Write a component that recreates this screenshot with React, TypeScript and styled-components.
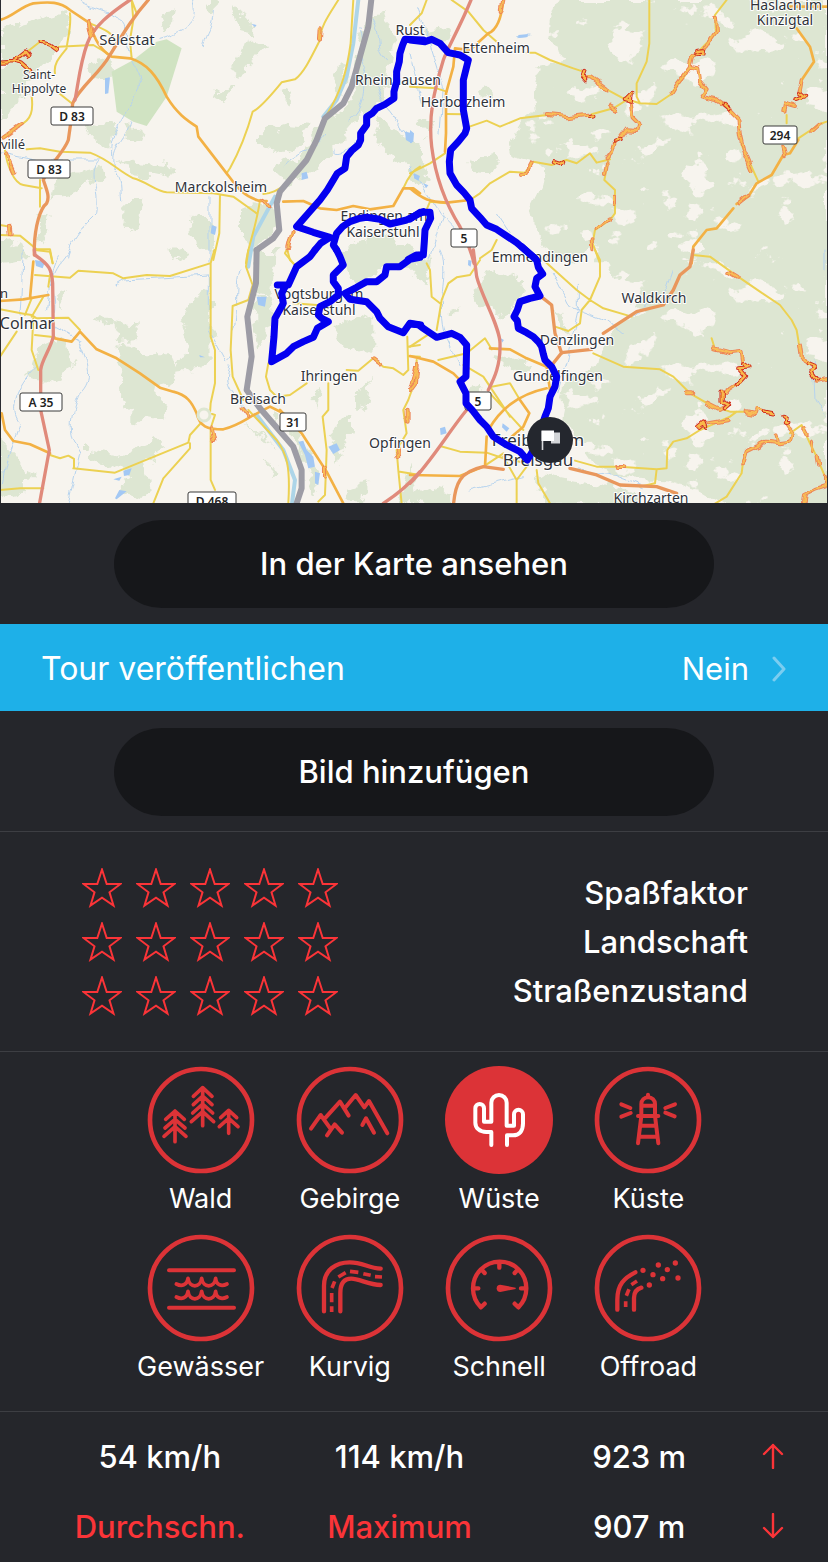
import React, { useState } from "react";
import styled, { createGlobalStyle } from "styled-components";

const color = {
  page: "#25262b",
  pill: "#16171a",
  line: "#3d3e43",
  blue: "#1eb0e8",
  red: "#fb3438",
  badge: "#dc3337",
  text: "#ffffff",
};

const GlobalStyle = createGlobalStyle`
  *, *::before, *::after { box-sizing: border-box; }
  body {
    margin: 0;
    background: ${color.page};
    color: ${color.text};
    font-family: Inter, "Liberation Sans", sans-serif;
  }
  button { font: inherit; color: inherit; border: 0; cursor: pointer; }
`;

/* ---------- map data: four tiles, three units per pixel ---------- */

type Layer =
  | "forest" | "deep" | "wood" | "stream" | "lake" | "minor" | "major"
  | "trunk" | "motorway" | "winding" | "hairpin" | "border" | "rhine" | "route";

type Tile = { x: number; y: number } & Partial<Record<Layer, string>>;

const tiles: Tile[] = [
  {
    x: 0,
    y: 0,
    forest:
      "M0 100L60 70L200 35L195 90L150 190L100 240L60 300L20 340L0 360ZM1100 50L1160 40L1180 150L1170 250L1140 300L1090 340L1030 410L960 500L900 540L870 555L820 510L900 470L920 430L970 365L1050 310ZM780 400L860 375L920 380L900 430L850 460L780 440ZM1140 335L1190 400L1260 430V505L1180 470L1120 400ZM360 470L420 490L520 500L500 530L400 520ZM160 540L240 515L300 500L310 530L200 580L150 590ZM560 690L600 645L640 670L650 740L600 740ZM370 600L430 600L420 690L370 670ZM720 620L770 610L830 620L825 710L760 750L720 700ZM715 150L760 120L800 130L760 180L740 230L700 220ZM640 265L690 270L670 320ZM1000 220L1045 190L1030 300L1000 250ZM110 660L150 640L130 740ZM1050 735L1150 700L1260 760V800H1060ZM270 380L340 360L330 440L280 430ZM380 380L440 390L420 440L380 430ZM480 40L530 30L525 80L490 90ZM700 30L740 50L760 100L720 90ZM840 280L880 260L870 320ZM270 190L330 180L320 250L280 240ZM610 0H660L640 40ZM0 730L40 720L30 780H0Z",
    deep: "M335 215L400 180L470 125L500 118L545 145L500 290L440 378L400 365L350 335Z",
    stream:
      "M240 0C260 30 380 40 380 80C370 180 430 200 420 270C380 340 330 400 335 470M580 0C600 60 570 90 480 115M640 30C635 100 620 90 610 140M390 365C370 430 330 440 340 500C370 540 360 560 365 600M300 480C260 520 300 560 290 640C230 700 210 720 200 780M0 455L120 480L300 480M1080 80C1100 130 1070 160 1100 200C1080 260 1110 300 1050 360M1120 60C1150 110 1120 140 1160 180M850 500C890 450 940 460 980 400M1000 440C990 480 1030 470 1080 410M1125 240L1150 310L1225 410M630 590V780",
    lake: "M315 235L330 232L325 280L315 282ZM1215 395L1240 400L1235 430L1218 420ZM635 675L650 680L645 705L632 700ZM905 520L920 515L925 535L905 540ZM755 72L770 75L765 82Z",
    rhine: "M1075 0L1060 130L1040 230L1010 300L970 350M825 590L760 710L745 800",
    minor:
      "M270 70C320 90 340 100 350 130M210 40C215 80 200 130 200 145C180 170 160 190 165 220M175 140L280 135L330 165M395 0L400 60L390 120L395 175M395 0L410 40M165 270L215 310M95 290C100 330 95 360 60 375L10 410M80 448L120 445L180 455L270 458C330 480 350 510 400 535C440 545 470 575 500 577L640 580L700 590L770 640M1015 0C990 40 960 80 960 120C930 180 910 220 885 238L845 247C810 290 780 325 758 335C740 400 720 450 690 505L680 520M660 585L658 700L640 780M1060 0L1052 130C1040 220 1020 280 980 345C950 420 910 500 870 545C830 575 810 580 790 582M780 600C770 680 740 750 738 790M15 450C20 490 40 550 70 555L125 565M120 540V620M0 705L60 707L110 748H150L158 790M1260 500C1240 510 1225 530 1210 565M865 740L855 760L880 790M0 675L30 680M50 180L120 125",
    major:
      "M0 60C40 50 60 20 100 10C150 5 180 5 210 30L270 70C280 110 300 150 335 170L390 175C440 190 470 225 500 290C530 340 560 360 590 380L595 410L680 520C710 560 730 590 780 603H800M850 605L910 603L960 625L1010 630L1060 618L1110 628L1180 618L1210 565L1240 565L1260 580",
    trunk:
      "M445 0C400 50 370 100 330 165C300 220 240 260 218 310C215 350 210 390 205 420C190 460 150 490 130 540C140 570 150 590 140 610C120 625 105 680 103 740V765",
    motorway: "M390 0C330 40 280 80 262 130C240 190 235 250 225 300",
    winding: "M962 85L960 120M790 600L810 625M875 690L862 745M30 680L32 700M10 410L60 375M15 460L40 515M268 60L278 110",
    hairpin: "M5 185L40 183L75 155L85 168M40 185L65 190L90 212M125 125L150 130L170 145",
    border:
      "M1115 -10L1105 80L1080 170L1055 260L1030 310L975 355L950 420L920 480L840 575L830 610L838 690L820 715L770 750",
    route:
      "M1270 120L1215 118L1208 135L1200 160L1198 185L1190 215L1190 245L1182 275V295L1155 313L1130 325L1117 340L1100 350V375L1082 400V420L1075 435L1055 452L1040 470L1035 505L1012 520L1000 540L982 570L960 600L925 640L890 680L940 697L990 712L962 730L945 750M1010 750L1000 735L1010 700L1028 680L1050 665L1076 656L1100 652L1140 658L1170 672L1220 660L1270 635",
  },
  {
    x: 410,
    y: 0,
    wood:
      "M450 0L430 60L420 110L440 150L480 180L390 200L370 260L380 330L330 370L300 420L310 470L400 500L390 560L360 620L380 700L420 790H1254V0Z",
    forest:
      "M40 90L90 80L120 110L100 130L50 110ZM220 250L260 280L250 300L210 280ZM180 480L240 465L265 490L240 520L190 515ZM0 460L40 490L60 540L20 560L0 540ZM30 340L60 370L50 410L20 380Z",
    stream: "M20 20L60 130L100 260L90 400M0 500L90 640L150 700M320 110L360 105M100 640L60 780M0 160L40 320M260 640L300 700",
    lake: "M0 390L12 400L10 425L0 430ZM12 520L30 528L25 542L12 535ZM325 105L355 102L350 112L325 114ZM40 550L55 556L48 565Z",
    minor:
      "M125 0L175 35L220 90L260 125M50 0L35 40L0 75M0 520L60 490L105 460M0 260L80 265L110 275M110 342L160 343M350 158H375L420 180L490 205L520 215M180 600L210 580L240 550L300 515L345 518L370 485L425 495L470 480L500 490L540 460L560 488L600 478M170 383L230 362L270 380L330 355L410 345M545 343L610 325L650 300M590 268L640 295L690 310L740 312L780 285L830 220M718 0V130L710 185L680 250V290L690 310M950 0L915 45L918 100L870 150M595 480L583 540L615 570V640L600 660L555 690L548 730L570 790M990 400L995 435L1045 545M1250 365L1230 372L1165 415M1130 345V370M260 720L245 750L210 775M110 610L60 605L45 640",
    major:
      "M280 0C275 50 260 90 235 100L180 150L135 145L130 200L108 280V400L105 455M0 565C40 600 60 605 110 608L180 600M1160 85L1200 140L1212 185L1175 240L1170 290M1165 420L1140 460L1120 465L1085 525L1040 550L1015 590L980 612M970 625L920 685L890 690L850 740L845 790M1120 440L1125 465M1130 20L1250 20",
    motorway: "M183 0C150 80 110 150 100 180C70 280 55 350 65 440C75 520 100 600 150 680C175 730 185 760 192 790",
    winding:
      "M530 235L545 235L590 268M410 345L475 352L545 343M600 320L618 330M660 315L665 350L685 370L680 390L650 388L630 415L615 430L605 455L590 475M590 490L585 525M915 50L918 95L880 150L850 165L842 200L865 205L870 240L890 265L872 290L920 300L950 320L985 355L990 405L1000 450L1025 510M842 200L800 255L785 280M1175 240L1168 280M1155 318L1125 310L1120 335M330 522L350 518L365 490M615 590V615M600 655L560 685M548 715L550 745M1210 390L1230 372M280 0L275 30M1120 440L1125 460M1015 585L985 610",
    hairpin:
      "M520 210L515 225L528 240M650 300L665 285L662 305L645 300M865 150L882 148L880 160L865 158M1168 280L1182 292L1160 300M940 312L955 325M615 425L632 420M540 345L550 343M435 487L450 492L462 484",
    route:
      "M375 775L340 745L320 728L290 708L260 688L230 675L210 652L185 625L180 600L162 578L140 555L120 520L118 485L122 450L145 425L165 400L170 385L160 330V240L175 180L150 165L115 158L90 130L65 118L45 125L0 120M0 657L30 637L60 637L62 655L45 690L43 725L40 765L20 765L-5 778",
  },
  {
    x: 0,
    y: 250,
    forest:
      "M350 280L400 285L440 310L520 310L545 350L510 400L460 410L500 480L490 510L430 500L400 525V480L370 440L350 420L370 370ZM540 200L590 140L630 130L632 330L600 350L530 360L570 280ZM325 210L410 220V270L360 275ZM100 300L180 260L220 310L210 370L150 400L60 390L120 330ZM255 595L350 610L390 600L460 570L490 600L440 640L455 720L420 745L360 730L390 670L300 640L255 620ZM0 560L60 620L95 680L60 740L0 760ZM770 130L810 130L820 200L775 300L760 240ZM755 0H830L815 130L775 120ZM980 560L1050 490V550L1010 640ZM1000 230L1120 190V290L1040 310ZM1020 0H1260L1230 30L1100 90L1045 80ZM1060 430L1110 390L1100 460L1070 480ZM800 640L830 650L820 690ZM1240 640L1190 760H1260ZM1040 710L1100 700L1090 760H1040ZM300 200L325 205L310 235ZM0 0L60 -20L80 30L0 40ZM500 0L550 -10L560 20L510 30ZM720 520L830 590L800 560ZM930 430L960 420L950 480ZM860 520L900 560L960 700L940 740L900 600ZM170 130L200 120L190 180ZM820 480L850 500L835 520Z",
    stream:
      "M70 0L60 200M210 0C190 40 150 50 140 180M350 105L375 90L625 75M625 75V240L680 340L690 320M235 270C270 350 280 390 240 430C210 500 200 540 240 610L200 780M110 350C60 400 20 470 60 520C40 580 20 640 10 700M720 60C700 120 720 180 700 240M690 350C670 400 690 420 740 480M175 20C130 100 190 150 150 220L240 270",
    lake:
      "M770 140H800L795 170L775 165ZM895 575L910 572L920 600L940 620L945 650L925 655L915 615ZM985 590L1010 580L1020 600L1000 612ZM945 665L960 670L955 705L945 700ZM340 688L365 680L358 692ZM370 662L395 655L388 675L372 678ZM345 745L358 720L380 724L350 748ZM598 315L615 322L600 322ZM105 30L135 35L128 55L108 48Z",
    rhine: "M770 495L850 600L885 690L875 770",
    minor:
      "M105 0L150 5L158 40M105 75L210 83L235 62L340 70L370 85L440 75L510 78L630 40M643 0L632 40V260L645 300V400L632 460L630 490L645 495L632 535V690L645 720M0 178L75 192L95 195L110 205L205 203L240 240M130 140L95 200M75 195L95 145M150 75L145 110M100 205L95 300L115 360M105 255L165 262M50 245L0 320M220 655L345 668L565 578L570 555L600 522M150 615L180 625L205 617L222 627V655M0 720L60 715H130M570 580V595L490 685L460 760M745 0L738 50L758 105L745 150L698 168L692 300L698 380L730 450M745 480L830 570C860 610 872 650 865 760M805 340L798 380L810 420L830 440L870 435L920 400M985 400V480L968 500L980 600L978 660L975 735L955 755M1040 360L1075 362L1120 325L1150 350L1180 355L1210 375L1225 360L1222 260M1225 290L1260 285M1225 318L1260 320M1250 330V380L1225 450L1210 480L1220 550L1190 600L1195 660L1205 760M1200 665L1260 675M862 0L870 30L890 50M880 160L950 165",
    major:
      "M100 35L90 145M0 153L70 148L145 135M165 265L215 275L240 245L290 298L350 325L420 370L480 413L520 425C560 435 575 455 590 490C600 530 620 538 670 538C720 525 740 505 775 488L810 470L850 490M840 480L905 550L980 665L1030 760M5 490L15 540L40 573L90 583L150 610",
    motorway:
      "M103 0L105 15C150 45 155 60 158 100L160 260C150 300 125 330 122 360V480L148 600L115 780M1150 760C1190 735 1230 700 1260 665",
    winding: "M1120 325L1140 340M1248 350L1235 410M1220 485V515M728 475L745 498M633 535L640 570M1190 590L1195 615M978 650V680",
    border: "M770 0L768 100L742 200L755 320L740 420L780 475L880 590L905 660V715L885 775",
    route:
      "M945 0L930 20L890 50L865 105L832 105M857 107L845 130L850 160L825 205L822 260L815 335L860 310L880 290L910 275L940 262L952 235L985 215L965 205L955 195L960 170L990 155L1015 135V115L1000 95V75L1030 45L1020 20L1010 0M1260 22L1230 28L1200 50L1160 50L1155 75L1130 95L1100 95L1070 112L1035 130L1050 148L1100 155L1130 185L1140 205L1165 230L1210 248L1230 220L1262 225",
  },
  {
    x: 410,
    y: 250,
    wood:
      "M580 0H1254V770H950L830 700L640 690L560 650L500 560L450 500L470 400L560 330L620 230L700 190L640 150L600 60Z",
    forest:
      "M200 90L260 50L340 100L330 155L300 200L240 180L190 120ZM380 670L480 690L580 700L680 730L700 770H420ZM240 315L370 340L340 370L250 330ZM120 180L145 175L140 205ZM180 400L200 395L215 430L190 420ZM0 740L60 710L120 730V770H0ZM420 180L460 200L470 250L440 230ZM20 20L60 30L50 100L10 80Z",
    stream: "M90 0C120 60 80 150 100 240L150 350M430 70L480 170L590 210L640 250M505 100V180L470 330L440 430M790 60L770 120L660 200M500 660L600 670L700 710M180 720L340 680M1210 330L1215 450L1245 500M1245 0V60",
    lake: "M90 535L105 530L110 550L92 555ZM175 30L185 32L182 50L174 45ZM272 265L282 270L276 278ZM278 520L298 535L290 545L276 532Z",
    minor:
      "M50 40L60 60L65 140L90 160M210 30L180 75L140 82L115 100L95 150L80 240M555 0L570 30V80L540 150L515 180L510 220L475 243L435 230M400 30L500 120L540 150L580 175L665 200M0 290L60 250M85 330L170 310L225 265L245 298M160 345L220 380L300 500M245 410L300 400L330 450M240 430L340 540M90 588L150 605L230 608L280 625L350 640M380 660L385 700L420 760M280 620L320 690V770M320 690L350 650M220 650L280 610M495 632L560 650H630L740 658L770 655L772 600L790 575L830 565L870 540L960 500L980 485M550 310L640 350L750 358L790 380L840 430L900 465L960 485H1010M740 658L735 700L690 710M850 15L900 20L970 70L1050 125L1110 165L1145 210L1160 240L1170 300M905 265L915 298M900 770L950 740L995 670L1000 630M1140 550L1175 525L1200 580L1220 620L1245 680",
    major:
      "M0 318L70 335L130 370L160 400M240 295L300 298L350 325L410 350L420 420M235 540C270 480 320 435 410 415M330 450L358 490L340 530L305 560M230 560L225 650M0 675L150 678L215 652",
    trunk:
      "M850 0L840 50L810 75L790 120L760 165L680 185L580 250M430 340L455 308L545 298M400 145L425 165L435 250L455 310M130 770C135 700 150 665 220 650L280 658M480 655L560 675L630 705L740 710L800 730",
    motorway: "M190 0L200 80C215 140 270 230 270 280C272 350 250 390 235 420M170 480C120 540 60 640 0 700",
    winding:
      "M915 298L960 310L995 305L1000 340M985 400L940 430M955 465L930 480L890 460M895 520L950 510M1010 487L1035 492L1040 475L1065 485M1125 515L1145 545L1140 575L1105 580L1100 562M1105 580L1070 575L1010 605L1000 640M1170 285L1175 320L1190 340M1220 395L1250 390M1180 535L1190 555M1200 575L1205 600M1220 620L1225 650M1245 680V710L1215 720L1185 735L1180 770M830 430H850M955 65L980 80M620 648H640M1245 680L1245 710M20 345L15 400L0 420",
    hairpin:
      "M1000 340L1018 352L985 355L1005 378L985 400M935 425L935 455L957 465L945 475M865 530L880 518L885 530M1065 485L1090 490M1118 495L1130 505L1125 518L1138 520M1190 340L1215 350L1205 365L1222 388",
    route:
      "M335 -10L380 30L385 52L398 72L380 85L375 110L390 138L360 145L330 155L322 180L312 200L322 212L325 235L350 248L370 260L385 275L395 290L400 312L405 330L425 350L440 380L435 410L420 440L415 475L405 500L370 600L352 630L330 605L290 585L250 560L230 530L210 510L188 482L168 460V430L150 395L168 380L170 285L150 262L125 250L80 262L62 250L40 235L25 224L0 222",
  },
];

type Pen = { layer: Layer; fill?: string; stroke?: string; width?: number; filter?: string };

const pens: Pen[] = [
  { layer: "wood", fill: "#dde6d2", filter: "url(#clearings)" },
  { layer: "forest", fill: "#dde6d2", filter: "url(#ragged)" },
  { layer: "deep", fill: "#d0e3c2" },
  { layer: "stream", stroke: "#b6d3ee", width: 3, filter: "url(#wiggle)" },
  { layer: "lake", fill: "#a3c8f4" },
  { layer: "rhine", stroke: "#add5e8", width: 12 },
  { layer: "minor", stroke: "#ecd152", width: 6 },
  { layer: "major", stroke: "#f3b144", width: 8 },
  { layer: "trunk", stroke: "#e9975c", width: 10 },
  { layer: "motorway", stroke: "#e08a7b", width: 10 },
  { layer: "winding", stroke: "#ec8558", width: 12, filter: "url(#wiggle)" },
  { layer: "winding", stroke: "#f8bd55", width: 6, filter: "url(#wiggle)" },
  { layer: "hairpin", stroke: "#cf2f22", width: 13, filter: "url(#wiggle)" },
  { layer: "hairpin", stroke: "#f9b84a", width: 7, filter: "url(#wiggle)" },
  { layer: "border", stroke: "#9d9ca5", width: 18 },
];

const routePens: Pen[] = [{ layer: "route", stroke: "#0400f0", width: 21 }];

const places: { x: number; y: number; size: number; name: string }[] = [
  { x: 127, y: 45, size: 15, name: "Sélestat" },
  { x: 39, y: 79, size: 12, name: "Saint-" },
  { x: 39, y: 93, size: 12, name: "Hippolyte" },
  { x: 13, y: 149, size: 13, name: "villé" },
  { x: 221, y: 192, size: 14, name: "Marckolsheim" },
  { x: 410, y: 35, size: 14, name: "Rust" },
  { x: 496, y: 53, size: 14, name: "Ettenheim" },
  { x: 398, y: 85, size: 14, name: "Rheinhausen" },
  { x: 463, y: 107, size: 14, name: "Herbolzheim" },
  { x: 384, y: 221, size: 14, name: "Endingen am" },
  { x: 383, y: 237, size: 14, name: "Kaiserstuhl" },
  { x: 540, y: 262, size: 14, name: "Emmendingen" },
  { x: 319, y: 299, size: 14, name: "Vogtsburg im" },
  { x: 319, y: 315, size: 14, name: "Kaiserstuhl" },
  { x: 654, y: 303, size: 14, name: "Waldkirch" },
  { x: 577, y: 345, size: 14, name: "Denzlingen" },
  { x: 329, y: 381, size: 14, name: "Ihringen" },
  { x: 558, y: 381, size: 14, name: "Gundelfingen" },
  { x: 258, y: 404, size: 14, name: "Breisach" },
  { x: 400, y: 448, size: 14, name: "Opfingen" },
  { x: 538, y: 446, size: 17, name: "Freiburg im" },
  { x: 538, y: 466, size: 17, name: "Breisgau" },
  { x: 651, y: 503, size: 14, name: "Kirchzarten" },
  { x: 27, y: 329, size: 16, name: "Colmar" },
  { x: 4, y: 298, size: 13, name: "n" },
  { x: 786, y: 10, size: 14, name: "Haslach im" },
  { x: 785, y: 25, size: 14, name: "Kinzigtal" },
];

const shields: { x: number; y: number; w: number; name: string }[] = [
  { x: 72, y: 116, w: 42, name: "D 83" },
  { x: 49, y: 169, w: 42, name: "D 83" },
  { x: 780, y: 135, w: 34, name: "294" },
  { x: 464, y: 238, w: 26, name: "5" },
  { x: 478, y: 401, w: 26, name: "5" },
  { x: 293, y: 422, w: 26, name: "31" },
  { x: 41, y: 402, w: 42, name: "A 35" },
  { x: 212, y: 501, w: 48, name: "D 468" },
];

const MapSvg = styled.svg`
  display: block;
  width: 100%;
  height: auto;
  background: #f7f4ee;
`;

const PlaceName = styled.text`
  font-family: "Noto Sans", "Open Sans", sans-serif;
  fill: #30333a;
  stroke: #ffffff;
  stroke-width: 2px;
  stroke-linejoin: round;
  paint-order: stroke;
  text-anchor: middle;
`;

const ShieldName = styled.text`
  font: 600 12px "Noto Sans", "Open Sans", sans-serif;
  fill: #222222;
  text-anchor: middle;
`;

function Layers({ items }: { items: Pen[] }) {
  return (
    <>
      {items.map((pen, i) =>
        tiles.map((tile) => {
          const d = tile[pen.layer];
          if (!d) return null;
          return (
            <g key={`${i}-${tile.x}-${tile.y}`} transform={`translate(${tile.x} ${tile.y}) scale(0.3333)`}>
              <path
                d={d}
                fill={pen.fill ?? "none"}
                stroke={pen.stroke}
                strokeWidth={pen.width}
                strokeLinejoin="round"
                strokeLinecap="round"
                filter={pen.filter}
              />
            </g>
          );
        })
      )}
    </>
  );
}

function TourMap() {
  return (
    <MapSvg viewBox="0 0 828 503" role="img" aria-label="Karte der Tour">
      <defs>
        <filter id="ragged" x="-5%" y="-5%" width="110%" height="110%">
          <feTurbulence type="fractalNoise" baseFrequency="0.022" numOctaves="4" seed="4" result="n" />
          <feDisplacementMap in="SourceGraphic" in2="n" scale="60" xChannelSelector="R" yChannelSelector="G" />
        </filter>
        <filter id="wiggle" x="-5%" y="-5%" width="110%" height="110%" colorInterpolationFilters="sRGB">
          <feTurbulence type="fractalNoise" baseFrequency="0.028" numOctaves="1" seed="7" result="n" />
          <feDisplacementMap in="SourceGraphic" in2="n" scale="28" xChannelSelector="R" yChannelSelector="G" />
        </filter>
        <filter id="clearings" x="0" y="0" width="100%" height="100%">
          <feTurbulence type="fractalNoise" baseFrequency="0.01 0.012" numOctaves="5" seed="11" result="n" />
          <feColorMatrix
            in="n"
            type="matrix"
            values="0 0 0 0 0  0 0 0 0 0  0 0 0 0 0  30 0 0 0 -10.6"
            result="mask"
          />
          <feDisplacementMap in="SourceGraphic" in2="n" scale="60" xChannelSelector="G" yChannelSelector="B" result="edge" />
          <feComposite in="edge" in2="mask" operator="in" />
        </filter>
      </defs>
      <Layers items={pens} />
      <circle cx="204" cy="415" r="6" fill="none" stroke="#dde6d2" strokeWidth="3" />
      {places.map((p, i) => (
        <PlaceName key={i} x={p.x} y={p.y} fontSize={p.size}>
          {p.name}
        </PlaceName>
      ))}
      {shields.map((s, i) => (
        <g key={i}>
          <rect x={s.x - s.w / 2} y={s.y - 9} width={s.w} height="18" rx="2" fill="#fff" stroke="#3a3a3a" />
          <ShieldName x={s.x} y={s.y + 5}>{s.name}</ShieldName>
        </g>
      ))}
      <Layers items={routePens} />
      <circle cx="550" cy="440" r="23" fill="#24272e" />
      <path d="M542.500 431V450" stroke="#d9dadc" strokeWidth="1.6" />
      <path d="M551 432.500H560V443.500H551Z" fill="#d3d5d8" />
      <path d="M541.500 430.500H554V441H541.500Z" fill="#fff" />
      <path d="M0.500 0V503M827.500 0V503" stroke="#2b2c31" />
    </MapSvg>
  );
}

/* ---------- terrain icons, three units per pixel around the centre ---------- */

const icons: Record<string, React.ReactNode> = {
  Wald: (
    <path
      strokeWidth="11"
      d="M-23-71L5-97L33-71M-23-46L5-72L33-46M-25-21L5-48L35-21M-29 5L5-25L38 5M5-97V17M-106-2L-78-27L-50-2M-108 24L-78-2L-48 24M-111 49L-78 20L-45 49M-78-27V65M59-7L83-29L107-7M55 20L83-5L111 20M83-29V40"
    />
  ),
  Gebirge: (
    <path
      strokeWidth="12"
      d="M-117 26L-88-15L-57 28M-78-2L-30-55L-4-13M-17-34L17-75L43-38L57-57L112 40M-69 46L-46 13L-24 38M37 15L48-5L72 38"
    />
  ),
  Wüste: (
    <path
      strokeWidth="12"
      d="M-23 75V36H-38C-58 36-71 24-71 8V-35A13 13 0 0 1-45-35V5H-23V-52A23 23 0 0 1 23-52V17H45V-17A13 13 0 0 1 72-17V10C72 34 60 46 42 46H24V75"
    />
  ),
  Küste: (
    <>
      <path
        strokeWidth="12"
        d="M-20-12V-48A20 20 0 0 1 21-48V-12M-20-43H21M-30-12H31M-20-12L-30 70M21-12L31 70M-22 17H23M-26 50H27"
      />
      <path strokeWidth="12" d="M0-76V-70M-80-47L-53-36M-80-10L-52-21M81-47L52-36M80-11L52-22" />
    </>
  ),
  Gewässer: (
    <>
      <path strokeWidth="12" d="M-96-53H99M-96 59H99" />
      <path
        strokeWidth="11"
        d="M-74-12C-58-4-42-8-39-29C-35 1-2 1 2-29C6 1 40 1 44-29C46-8 62-4 78-12M-74 27C-58 35-42 31-39 10C-35 40-2 40 2 10C6 40 40 40 44 10C46 31 62 35 78 27"
      />
    </>
  ),
  Kurvig: (
    <>
      <path
        strokeWidth="13"
        d="M-78 70V-7C-78-55-41-77-1-77C39-77 54-60 92-58M-29 70V15C-29-15-16-28 4-28C29-28 54-10 92-9"
      />
      <path
        strokeWidth="11"
        strokeLinecap="butt"
        d="M-55 72V55M-55 43V15M-54 0L-46-20M-35-33L-13-46M0-50L25-47M40-43L62-38M75-34L96-33"
      />
    </>
  ),
  Schnell: (
    <>
      <path
        strokeWidth="13"
        d="M-43 47L-54 58A80 80 0 1 1 58 58L47 47M1-76V-61M-50-53L-43-45M54-53L47-45M-76 1H-62M80 1H66"
      />
      <path fill="currentColor" stroke="none" d="M50-1L4-10A11 11 0 1 0 4 12L50 3Z" />
    </>
  ),
  Offroad: (
    <>
      <path strokeWidth="13" d="M-92 65V35C-92-10-72-30-38-47M-42 65V30C-42 12-34 3-20-1" />
      <path strokeWidth="11" strokeLinecap="butt" d="M-67 57V40M-65 23L-57 4M-50-10L-33-21" />
      <path strokeWidth="16" d="M-15-53h.01M31-69h.01M82-75h.01M58-55h.01M15-40h.01M44-28h.01M90-30h.01M4-9h.01" />
    </>
  ),
};

/* ---------- page parts ---------- */

const Page = styled.main`
  width: 100%;
`;

const ActionBar = styled.div<{ $divided?: boolean }>`
  display: flex;
  justify-content: center;
  padding: 17px 32px 15px;
  border-bottom: 1px solid ${(p) => (p.$divided ? color.line : color.page)};
`;

const PillButton = styled.button`
  width: 100%;
  max-width: 600px;
  height: 88px;
  padding: 0 0 2px;
  border-radius: 48px / 44px;
  background: ${color.pill};
  font-size: 31px;
  font-weight: 500;
`;

const PublishRow = styled.button`
  display: flex;
  align-items: center;
  width: 100%;
  height: 87px;
  padding: 2px 41px 0;
  background: ${color.blue};
  text-align: left;
`;

const PublishLabel = styled.span`
  flex: 1;
  font-size: 32px;
  font-weight: 400;
`;

const PublishValue = styled.span`
  font-size: 31px;
  margin-right: 22px;
`;

const Ratings = styled.section`
  display: flex;
  justify-content: space-between;
  padding: 29px 80px 28px 75px;
  border-bottom: 1px solid ${color.line};
`;

const StarRow = styled.fieldset`
  display: flex;
  margin: 0;
  padding: 0;
  border: 0;
`;

const StarLabel = styled.label`
  position: relative;
  display: grid;
  place-items: center;
  width: 54px;
  height: 54px;
  color: ${color.red};
  cursor: pointer;
`;

const StarInput = styled.input`
  position: absolute;
  inset: 0;
  width: 100%;
  height: 100%;
  margin: 0;
  opacity: 0;
  cursor: pointer;
`;

const RatingNames = styled.div`
  padding-top: 7px;
  text-align: right;
  font-size: 31px;
  font-weight: 500;
  line-height: 49px;
`;

const Terrain = styled.section`
  display: grid;
  grid-template-columns: repeat(4, 1fr);
  row-gap: 19px;
  padding: 14px 105px 28px 126px;
  border-bottom: 1px solid ${color.line};
`;

const TerrainButton = styled.button`
  display: flex;
  flex-direction: column;
  align-items: center;
  padding: 0;
  background: none;
  font-size: 27px;
  line-height: 32px;
  white-space: nowrap;
`;

const Badge = styled.svg<{ $active: boolean }>`
  width: 108px;
  height: 108px;
  margin-bottom: 9px;
  color: ${(p) => (p.$active ? "#ffffff" : color.badge)};
`;

const Stats = styled.section`
  display: grid;
  grid-template-columns: 1fr 1fr 1fr 28px;
  align-items: center;
  justify-items: center;
  grid-auto-rows: 70px;
  padding: 9px 41px 1px 40px;
  font-size: 31px;
  font-weight: 500;
`;

const Stat = styled.span<{ $accent?: boolean }>`
  color: ${(p) => (p.$accent ? color.red : color.text)};
`;

const Arrow = styled.svg`
  color: ${color.red};
`;

const ratingNames = ["Spaßfaktor", "Landschaft", "Straßenzustand"];
const starPath = "M20 1.500L24.700 16H38.500L27.500 24.300L31.500 37.500L20 29.700L8.500 37.500L12.500 24.300L1.500 16H15.300Z";

export default function App() {
  const [ratings, setRatings] = useState<number[]>([0, 0, 0]);
  const [active, setActive] = useState<string[]>(["Wüste"]);
  const [published, setPublished] = useState(false);

  const toggle = (name: string) =>
    setActive((list) => (list.includes(name) ? list.filter((n) => n !== name) : [...list, name]));

  return (
    <Page>
      <GlobalStyle />
      <TourMap />
      <ActionBar>
        <PillButton type="button">In der Karte ansehen</PillButton>
      </ActionBar>
      <PublishRow type="button" onClick={() => setPublished(!published)}>
        <PublishLabel>Tour veröffentlichen</PublishLabel>
        <PublishValue>{published ? "Ja" : "Nein"}</PublishValue>
        <svg width="16" height="26" viewBox="0 0 16 26" fill="none" aria-hidden="true">
          <path d="M3 2L13 13L3 24" stroke="#7bcdf0" strokeWidth="3" strokeLinecap="round" strokeLinejoin="round" />
        </svg>
      </PublishRow>
      <ActionBar $divided>
        <PillButton type="button">Bild hinzufügen</PillButton>
      </ActionBar>

      <Ratings>
        <div>
          {ratingNames.map((name, row) => (
            <StarRow key={name} aria-labelledby={`rating-${row}`}>
              {[1, 2, 3, 4, 5].map((n) => (
                <StarLabel key={n}>
                  <StarInput
                    type="radio"
                    name={`stars-${row}`}
                    value={n}
                    aria-label={`${n}`}
                    checked={ratings[row] === n}
                    onChange={() => setRatings(ratings.map((r, i) => (i === row ? n : r)))}
                  />
                  <svg width="40" height="40" viewBox="0 0 40 40" aria-hidden="true">
                    <path
                      d={starPath}
                      fill={ratings[row] >= n ? "currentColor" : "none"}
                      stroke="currentColor"
                      strokeWidth="2"
                    />
                  </svg>
                </StarLabel>
              ))}
            </StarRow>
          ))}
        </div>
        <RatingNames>
          {ratingNames.map((name, row) => (
            <div key={name} id={`rating-${row}`}>{name}</div>
          ))}
        </RatingNames>
      </Ratings>

      <Terrain>
        {Object.entries(icons).map(([name, drawing]) => {
          const on = active.includes(name);
          return (
            <TerrainButton key={name} type="button" aria-pressed={on} onClick={() => toggle(name)}>
              <Badge $active={on} viewBox="-162 -162 324 324" aria-hidden="true">
                {on ? (
                  <circle r="162" fill={color.badge} />
                ) : (
                  <circle r="153" fill="none" stroke={color.badge} strokeWidth="14" />
                )}
                <g fill="none" stroke="currentColor" strokeLinecap="round" strokeLinejoin="round">
                  {drawing}
                </g>
              </Badge>
              {name}
            </TerrainButton>
          );
        })}
      </Terrain>

      <Stats>
        <Stat>54 km/h</Stat>
        <Stat>114 km/h</Stat>
        <Stat>923 m</Stat>
        <Arrow width="24" height="26" viewBox="0 0 24 26" fill="none" role="img" aria-label="Bergauf">
          <path d="M12 25V2M3 11L12 2L21 11" stroke="currentColor" strokeWidth="2.400" strokeLinecap="round" strokeLinejoin="round" />
        </Arrow>
        <Stat $accent>Durchschn.</Stat>
        <Stat $accent>Maximum</Stat>
        <Stat>907 m</Stat>
        <Arrow width="24" height="26" viewBox="0 0 24 26" fill="none" role="img" aria-label="Bergab">
          <path d="M12 1V24M3 15L12 24L21 15" stroke="currentColor" strokeWidth="2.400" strokeLinecap="round" strokeLinejoin="round" />
        </Arrow>
      </Stats>
    </Page>
  );
}
